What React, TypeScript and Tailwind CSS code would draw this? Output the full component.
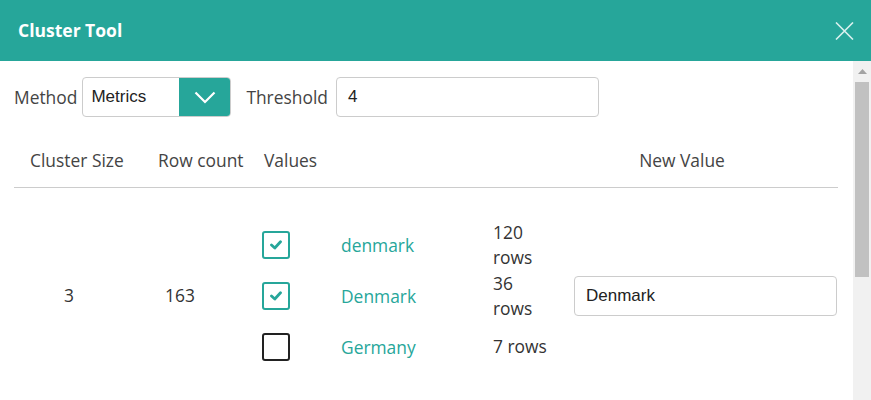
import React from "react";

const TEAL = "#26a69a";

function Check({ checked }: { checked: boolean }) {
  return (
    <div
      className={`w-[28px] h-[28px] rounded-[3px] border-[2.5px] flex items-center justify-center shrink-0 ${
        checked ? "border-[#26a69a]" : "border-[#222]"
      }`}
    >
      {checked && (
        <svg width="12" height="10" viewBox="0 0 12 10">
          <polyline points="1.5,5 4.8,8 10.5,1.8" fill="none" stroke={TEAL} strokeWidth="2.8" strokeLinecap="round" strokeLinejoin="round" />
        </svg>
      )}
    </div>
  );
}

const items = [
  { label: "denmark", rows: "120 rows", checked: true },
  { label: "Denmark", rows: "36 rows", checked: true },
  { label: "Germany", rows: "7 rows", checked: false },
];

const arial = { fontFamily: '"Liberation Sans", Arial, sans-serif' };

export default function App() {
  return (
    <div
      className="w-[871px] h-[400px] overflow-hidden bg-white flex flex-col text-[#444]"
      style={{ fontFamily: '"Open Sans", sans-serif' }}
    >
      <div className="h-[61px] bg-[#26a69a] flex items-center justify-between pl-[18px] pr-[17px] shrink-0">
        <div className="text-white font-bold text-[17.5px] leading-none">Cluster Tool</div>
        <svg width="19" height="18" viewBox="0 0 19 18">
          <path d="M1 0.5 L18 17.5 M18 0.5 L1 17.5" stroke="#d9f0ee" strokeWidth="1.6" />
        </svg>
      </div>
      <div className="flex flex-1 min-h-0">
        <div className="flex-1 pl-[14px] pr-[15px] pt-[16px]">
          <div className="flex items-center h-[40px] whitespace-nowrap">
            <span className="text-[17.4px] mr-[5px]">Method</span>
            <div className="flex h-[40px] w-[149px] border border-[#ccc] rounded-[4px] overflow-hidden">
              <div className="flex-1 flex items-center pl-[8px] text-[17px] text-[#222]" style={arial}>
                Metrics
              </div>
              <div className="w-[52px] bg-[#26a69a] flex items-center justify-center -my-px -mr-px">
                <svg width="22" height="13" viewBox="0 0 22 13">
                  <polyline points="1.5,1.5 11,11 20.5,1.5" fill="none" stroke="white" strokeWidth="2.2" />
                </svg>
              </div>
            </div>
            <span className="text-[17.4px] ml-[15px] mr-[8px]">Threshold</span>
            <div
              className="h-[40px] w-[263px] border border-[#ccc] rounded-[4px] flex items-center pl-[11px] text-[17px] text-[#222]"
              style={arial}
            >
              4
            </div>
          </div>
          <div className="flex items-center h-[55px] mt-[16px] text-[17.4px] border-b border-[#ccc] w-[824px] whitespace-nowrap">
            <div className="w-[110px] shrink-0 pl-[16px]">Cluster Size</div>
            <div className="w-[114px] shrink-0 pl-[34px]">Row count</div>
            <div className="w-[316px] shrink-0 pl-[26px]">Values</div>
            <div className="flex-1 text-center pr-[28px]">New Value</div>
          </div>
          <div className="flex items-center pt-[31px] w-[824px] text-[17.4px]">
            <div className="w-[110px] text-center text-[#333]">3</div>
            <div className="w-[114px] text-center pr-[2px] text-[#333]">163</div>
            <div className="flex flex-col pl-[24px]">
              {items.map((it) => (
                <div key={it.label} className="h-[51px] flex items-center">
                  <Check checked={it.checked} />
                  <div className="w-[152px] ml-[51px] text-[#26a69a] pt-[2px]">{it.label}</div>
                  <div className="w-[58px] leading-[25px] text-[#333]">{it.rows}</div>
                </div>
              ))}
            </div>
            <div
              className="ml-[23px] h-[40px] w-[263px] border border-[#ccc] rounded-[4px] flex items-center pl-[11px] text-[17px] text-[#222]"
              style={arial}
            >
              Denmark
            </div>
          </div>
        </div>
        <div className="w-[18px] bg-[#f1f1f1] flex flex-col items-center shrink-0">
          <div className="h-[21px] flex items-center justify-center">
            <svg width="9" height="5" viewBox="0 0 9 5">
              <polygon points="0,5 4.5,0 9,5" fill="#a3a3a3" />
            </svg>
          </div>
          <div className="w-[14px] h-[195px] bg-[#c1c1c1]" />
        </div>
      </div>
    </div>
  );
}
